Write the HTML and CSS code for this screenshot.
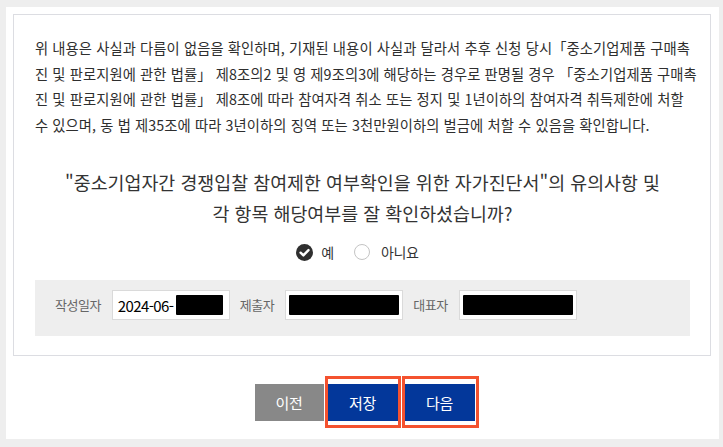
FILE: index.html
```html
<!DOCTYPE html>
<html lang="ko">
<head>
<meta charset="utf-8">
<title>자가진단서 확인</title>
<link rel="stylesheet" href="styles.css">
</head>
<body>
<div class="panel">
  <div class="confirm-box">
    <p class="notice">위 내용은 사실과 다름이 없음을 확인하며, 기재된 내용이 사실과 달라서 추후 신청 당시「중소기업제품 구매촉<br>진 및 판로지원에 관한 법률」 제8조의2 및 영 제9조의3에 해당하는 경우로 판명될 경우 「중소기업제품 구매촉<br>진 및 판로지원에 관한 법률」 제8조에 따라 참여자격 취소 또는 정지 및 1년이하의 참여자격 취득제한에 처할<br>수 있으며, 동 법 제35조에 따라 3년이하의 징역 또는 3천만원이하의 벌금에 처할 수 있음을 확인합니다.</p>
    <h2 class="question">"중소기업자간 경쟁입찰 참여제한 여부확인을 위한 자가진단서"의 유의사항 및<br>각 항목 해당여부를 잘 확인하셨습니까?</h2>
    <div class="choices">
      <label class="choice">
        <svg class="radio-on" width="17" height="17" viewBox="0 0 17 17"><circle cx="8.5" cy="8.5" r="8.5" fill="#2f2f2f"/><path d="M4.6 8.7 L7.4 11.4 L12.5 6.1" fill="none" stroke="#fff" stroke-width="2.4" stroke-linecap="round" stroke-linejoin="round"/></svg>
        <span>예</span>
      </label>
      <label class="choice">
        <span class="radio-off"></span>
        <span>아니요</span>
      </label>
    </div>
    <div class="sign-row">
      <span class="sign-label">작성일자</span>
      <div class="sign-field field-date"><span class="value">2024-06-</span><span class="redact redact-short"></span></div>
      <span class="sign-label">제출자</span>
      <div class="sign-field field-fill"><span class="redact"></span></div>
      <span class="sign-label">대표자</span>
      <div class="sign-field field-fill"><span class="redact"></span></div>
    </div>
  </div>
  <div class="actions">
    <button class="btn btn-prev" type="button">이전</button>
    <span class="highlight"><button class="btn btn-primary" type="button">저장</button></span>
    <span class="highlight highlight-next"><button class="btn btn-primary" type="button">다음</button></span>
  </div>
</div>
</body>
</html>
```

FILE: styles.css
```css
* { box-sizing: border-box; }
html, body { margin: 0; padding: 0; }
body {
  background: #eeeeee;
  font-family: "Noto Sans CJK KR", "Noto Sans", sans-serif;
  color: #333;
  padding: 7px 4px 8px 6px;
}
.panel {
  background: #fff;
  height: 432px;
  padding: 7px 8px 0 7px;
}
.confirm-box {
  border: 1px solid #dcdde2;
  padding: 20px 20px 19px 21px;
}
.notice {
  margin: 0;
  font-size: 14.3px;
  line-height: 25.5px;
  letter-spacing: 0.1px;
  white-space: nowrap;
  color: #2e2e2e;
}
.question {
  margin: 30px 0 0;
  font-size: 18.4px;
  font-weight: 400;
  line-height: 31px;
  letter-spacing: 0;
  text-align: center;
  color: #333;
}
.choices {
  margin-top: 13px;
  height: 20px;
  display: flex;
  justify-content: center;
  align-items: center;
  gap: 20px;
  padding-right: 10px;
  font-size: 14px;
  letter-spacing: -0.3px;
  color: #333;
}
.choice {
  display: flex;
  align-items: center;
  gap: 8px;
}
.radio-off {
  width: 16px;
  height: 16px;
  border-radius: 50%;
  border: 1px solid #c4c4c4;
  background: #fff;
  display: inline-block;
  margin-right: 3px;
}
.sign-row {
  margin-top: 18px;
  background: #eeeeee;
  height: 56px;
  padding: 10px 20px 0;
  display: flex;
  align-items: flex-start;
}
.sign-label {
  font-size: 13px;
  letter-spacing: -0.5px;
  color: #666;
  line-height: 30px;
  margin-right: 11px;
}
.sign-field {
  flex: 0 0 118px;
  height: 30px;
  background: #fff;
  border: 1px solid #dadada;
  display: flex;
  align-items: center;
  margin-right: 10px;
}
.field-date { padding: 0 6px 0 5px; }
.field-fill { padding: 0 3px; }
.value {
  font-size: 15px;
  letter-spacing: -0.6px;
  white-space: nowrap;
  color: #000;
}
.redact {
  background: #000;
  height: 20px;
  flex: 1;
  border-radius: 1px;
}
.redact-short { flex: 0 0 47px; margin-left: auto; }
.actions {
  margin-top: 28px;
  display: flex;
  justify-content: center;
  gap: 4px;
  padding-left: 5px;
}
.btn {
  width: 70px;
  height: 37px;
  border: 0;
  color: #fff;
  font-family: inherit;
  font-size: 15px;
  letter-spacing: -0.3px;
  cursor: pointer;
  display: block;
}
.btn-prev { background: #888888; width: 69px; }
.btn-primary { background: #03379a; }
.highlight { position: relative; display: block; }
.highlight-next { margin-left: 3px; }
.highlight::after {
  content: "";
  position: absolute;
  top: -8px;
  bottom: -7px;
  left: -3px;
  right: -3px;
  border: 3px solid #f4522f;
  pointer-events: none;
}
.highlight-next::after { right: -4px; }
```
